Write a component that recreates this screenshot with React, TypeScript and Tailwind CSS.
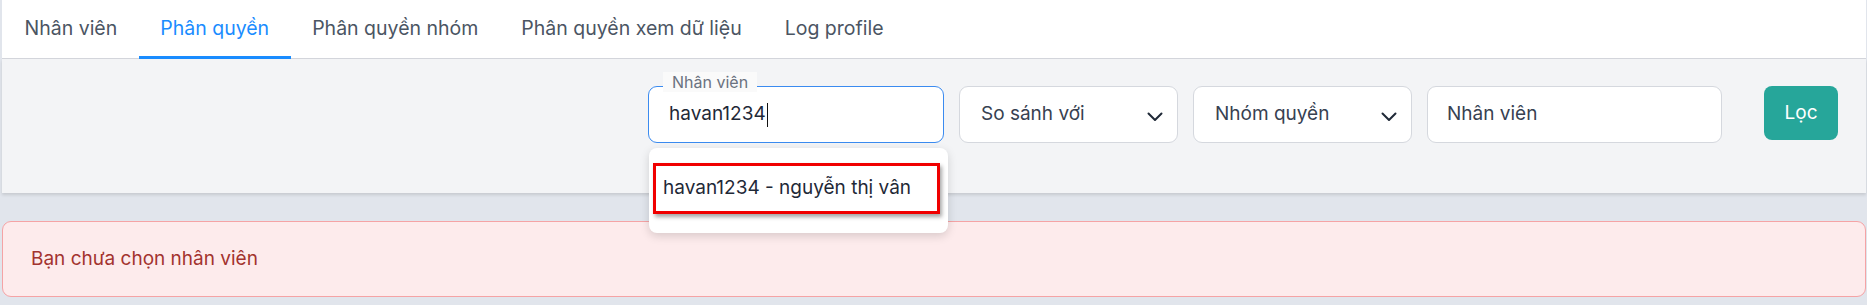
const tabs = ["Nhân viên", "Phân quyền", "Phân quyền nhóm", "Phân quyền xem dữ liệu", "Log profile"];

function Chevron() {
  return (
    <svg width="16" height="10" viewBox="0 0 16 10" fill="none" className="mt-[4px]">
      <polyline points="1.5,1.5 8,8 14.5,1.5" stroke="#1f2937" strokeWidth="2" strokeLinecap="round" strokeLinejoin="round" />
    </svg>
  );
}

function SelectBox({ label }: { label: string }) {
  return (
    <div className="flex h-[57px] w-[219px] items-center justify-between rounded-[9px] border border-[#d5d8de] bg-white pl-[21px] pr-[14px] text-[19px] text-[#374151]">
      <span>{label}</span>
      <Chevron />
    </div>
  );
}

export default function App() {
  const active = 1;

  return (
    <div className="min-h-[305px] bg-[#e1e5ec] pl-[2px] pr-[1px] font-['Inter',sans-serif]">
      {/* tabs */}
      <div className="flex h-[59px] border-b border-[#d4d6dc] bg-white pl-[1px]">
        {tabs.map((t, i) => (
          <div
            key={t}
            className={`relative flex h-full items-center px-[21.5px] text-[19.5px] ${i === active ? "text-[#1a8cff]" : "text-[#4b5563]"}`}
          >
            {t}
            {i === active && <div className="absolute bottom-[-1px] left-0 right-0 h-[3px] bg-[#1a8cff]" />}
          </div>
        ))}
      </div>

      {/* filters */}
      <div className="relative z-10 flex h-[134px] items-start justify-end gap-[15px] bg-[#f3f4f6] pr-[28px] pt-[27px] shadow-[0_2px_3px_rgba(0,0,0,0.12)]">
        <div className="relative h-[57px] w-[296px]">
          <div className="flex h-full items-center rounded-[9px] border border-[#3b8bf0] bg-white pl-[20px] text-[19px] text-[#1f2937]">
            havan1234
            <span className="ml-[1px] inline-block h-[24px] w-[1px] bg-[#111]" />
          </div>
          <span className="absolute left-[15px] top-[-14px] bg-[#fafafa] px-[9px] text-[16px] leading-[20px] text-[#6b7280]">
            Nhân viên
          </span>
          <div className="absolute left-[1px] top-[62px] w-[299px] rounded-[8px] bg-white px-[4px] pb-[19px] pt-[15px] shadow-[0_3px_10px_rgba(0,0,0,0.15)]">
            <div className="flex h-[51px] w-[287px] items-center border-[3px] border-[#f00000] pl-[7px] text-[19px] text-[#1f2937] shadow-[2px_3px_4px_rgba(0,0,0,0.35)]">
              havan1234 - nguyễn thị vân
            </div>
          </div>
        </div>
        <SelectBox label="So sánh với" />
        <SelectBox label="Nhóm quyền" />
        <div className="flex h-[57px] w-[295px] items-center rounded-[9px] border border-[#d5d8de] bg-white pl-[19px] text-[19px] text-[#374151]">
          Nhân viên
        </div>
        <button className="ml-[27px] h-[54px] w-[74px] rounded-[8px] bg-[#26a69a] text-[19px] text-white">Lọc</button>
      </div>

      {/* alert */}
      <div className="mt-[28px] flex h-[76px] items-center rounded-[9px] border border-[#f5a3a5] bg-[#fdebec] pl-[28px] text-[19px] text-[#a3332f]">
        Bạn chưa chọn nhân viên
      </div>
    </div>
  );
}
